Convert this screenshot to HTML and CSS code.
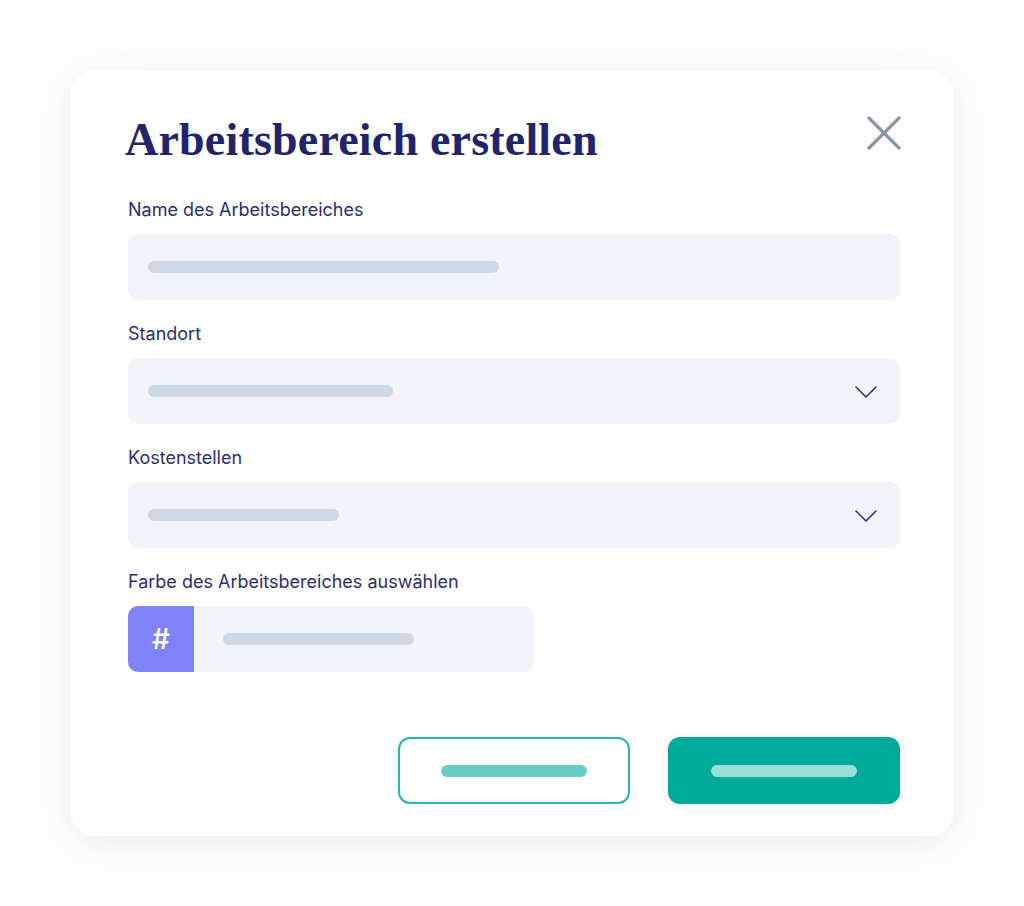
FILE: index.html
```html
<!DOCTYPE html>
<html lang="de">
<head>
<meta charset="utf-8">
<title>Arbeitsbereich erstellen</title>
<link rel="stylesheet" href="styles.css">
</head>
<body>
<div class="stage">
  <div class="card">
    <div class="head">
      <h1 class="title">Arbeitsbereich erstellen</h1>
      <button class="close" aria-label="Schließen">
        <svg width="34" height="34" viewBox="0 0 34 34"><path d="M2 2 L32 32 M32 2 L2 32" stroke="#8896a8" stroke-width="3.2" stroke-linecap="round" fill="none"/></svg>
      </button>
    </div>
    <div class="field">
      <div class="label">Name des Arbeitsbereiches</div>
      <div class="input"><span class="ph" style="width:351px"></span></div>
    </div>
    <div class="field">
      <div class="label">Standort</div>
      <div class="input"><span class="ph" style="width:245px"></span>
        <svg class="chev" width="22" height="12" viewBox="0 0 22 12"><path d="M1 1 L11 11 L21 1" stroke="#2e3178" stroke-width="1.6" fill="none" stroke-linecap="round" stroke-linejoin="round"/></svg>
      </div>
    </div>
    <div class="field">
      <div class="label">Kostenstellen</div>
      <div class="input"><span class="ph" style="width:191px"></span>
        <svg class="chev" width="22" height="12" viewBox="0 0 22 12"><path d="M1 1 L11 11 L21 1" stroke="#2e3178" stroke-width="1.6" fill="none" stroke-linecap="round" stroke-linejoin="round"/></svg>
      </div>
    </div>
    <div class="field">
      <div class="label">Farbe des Arbeitsbereiches auswählen</div>
      <div class="color-input">
        <div class="hash">#</div>
        <div class="color-value"><span class="ph" style="width:191px"></span></div>
      </div>
    </div>
    <div class="actions">
      <button class="btn btn-outline"><span class="bar bar-outline"></span></button>
      <button class="btn btn-solid"><span class="bar bar-solid"></span></button>
    </div>
  </div>
</div>
</body>
</html>
```
FILE: styles.css
```css
* { box-sizing: border-box; }
html, body { margin: 0; padding: 0; background: #ffffff; }
body { font-family: "Inter", "Noto Sans", sans-serif; }
.stage { padding: 70px; }
.card {
  width: 884px;
  height: 766px;
  background: #ffffff;
  border-radius: 26px;
  box-shadow: 0 6px 44px rgba(40, 50, 90, 0.1);
  padding: 0 54px 0 58px;
  display: flex;
  flex-direction: column;
}
.head {
  display: flex;
  justify-content: space-between;
  align-items: flex-start;
  height: 128px;
}
.title {
  margin: 0;
  margin-left: -3px;
  padding-top: 40px;
  font-family: "Liberation Serif", "DejaVu Serif", serif;
  font-weight: 700;
  font-size: 46px;
  line-height: 60px;
  color: #21246b;
  letter-spacing: 0.2px;
}
.close {
  margin-top: 46px;
  margin-right: -1px;
  padding: 0;
  border: 0;
  background: none;
  width: 34px;
  height: 34px;
}
.close svg { display: block; }
.field { display: flex; flex-direction: column; gap: 12px; margin-bottom: 22px; }
.label {
  font-size: 18px;
  line-height: 24px;
  color: #2c2d6e;
  height: 24px;
}
.input {
  height: 66px;
  border-radius: 10px;
  background: #f3f4f9;
  display: flex;
  align-items: center;
  justify-content: space-between;
  padding: 0 23px 0 20px;
}
.ph {
  display: block;
  height: 12px;
  border-radius: 6px;
  background: #cfd8e5;
}
.chev { display: block; margin-top: 2px; }
.color-input {
  width: 406px;
  height: 66px;
  display: flex;
  border-radius: 10px;
  overflow: hidden;
  background: #f3f4f9;
}
.hash {
  width: 66px;
  background: #8083f8;
  color: #ffffff;
  font-size: 28px;
  font-weight: 500;
  display: flex;
  align-items: center;
  justify-content: center;
}
.color-value { flex: 1; display: flex; align-items: center; padding-left: 29px; }
.actions {
  margin-top: 43px;
  display: flex;
  justify-content: flex-end;
  gap: 38px;
}
.btn {
  width: 232px;
  height: 67px;
  border-radius: 12px;
  display: flex;
  align-items: center;
  justify-content: center;
  padding: 0;
}
.btn-outline { background: #ffffff; border: 2px solid #2bb5a8; }
.btn-solid { background: #00aa9b; border: 0; box-shadow: 0 2px 8px rgba(0, 60, 60, 0.08); }
.bar { display: block; width: 146px; height: 12px; border-radius: 6px; }
.bar-outline { background: #6acdc5; }
.bar-solid { background: #9bdfd8; }
```
